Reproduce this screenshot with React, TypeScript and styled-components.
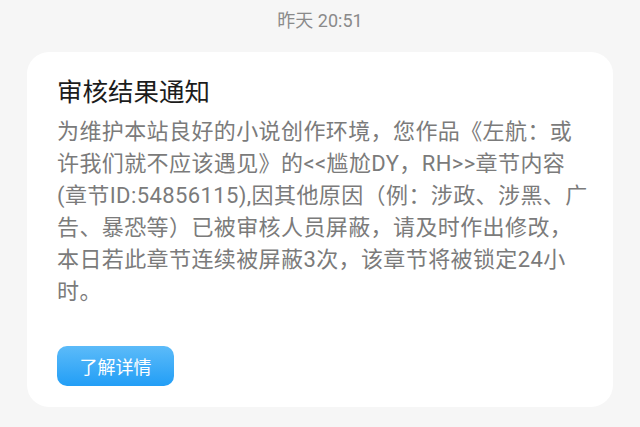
import React from 'react'
import styled, { createGlobalStyle } from 'styled-components'

const GlobalStyle = createGlobalStyle`
  html, body {
    margin: 0;
    padding: 0;
    background: #f6f6f6;
  }
  body {
    font-family: "Noto Sans CJK SC", "Noto Sans", Roboto, sans-serif;
  }
`

const Page = styled.div`
  width: 640px;
  height: 427px;
  overflow: hidden;
  background: #f6f6f6;
`

const TimeStamp = styled.div`
  text-align: center;
  padding-top: 8px;
  height: 52px;
  box-sizing: border-box;
  font-family: Roboto, "Noto Sans CJK SC", sans-serif;
  font-size: 18px;
  line-height: 26px;
  color: #8a8a8a;
`

const Card = styled.div`
  margin: 0 27px;
  background: #ffffff;
  border-radius: 22px;
  padding: 20px 24px 21px 30px;
`

const Title = styled.div`
  font-size: 25.5px;
  line-height: 36px;
  color: #1c1c1c;
  margin-bottom: 8px;
`

const Body = styled.div`
  font-family: Roboto, "Noto Sans CJK SC", sans-serif;
  font-size: 22px;
  line-height: 32px;
  color: #7b7b7b;
  letter-spacing: 0.4px;
  word-break: break-all;
`

const DetailButton = styled.button`
  display: block;
  margin-top: 38px;
  width: 117px;
  height: 40px;
  border: none;
  border-radius: 10px;
  background: linear-gradient(180deg, #5cbbf9 0%, #229ef6 100%);
  color: #ffffff;
  font-family: "Noto Sans CJK SC", sans-serif;
  font-size: 18px;
  padding: 0;
`

export default function App() {
  return (
    <Page>
      <GlobalStyle />
      <TimeStamp>昨天 20:51</TimeStamp>
      <Card>
        <Title>审核结果通知</Title>
        <Body>
          为维护本站良好的小说创作环境，您作品《左航：或许我们就不应该遇见》的&lt;&lt;尴尬DY，RH&gt;&gt;章节内容(章节ID:54856115),因其他原因（例：涉政、涉黑、广告、暴恐等）已被审核人员屏蔽，请及时作出修改，本日若此章节连续被屏蔽3次，该章节将被锁定24小时。
        </Body>
        <DetailButton>了解详情</DetailButton>
      </Card>
    </Page>
  )
}
